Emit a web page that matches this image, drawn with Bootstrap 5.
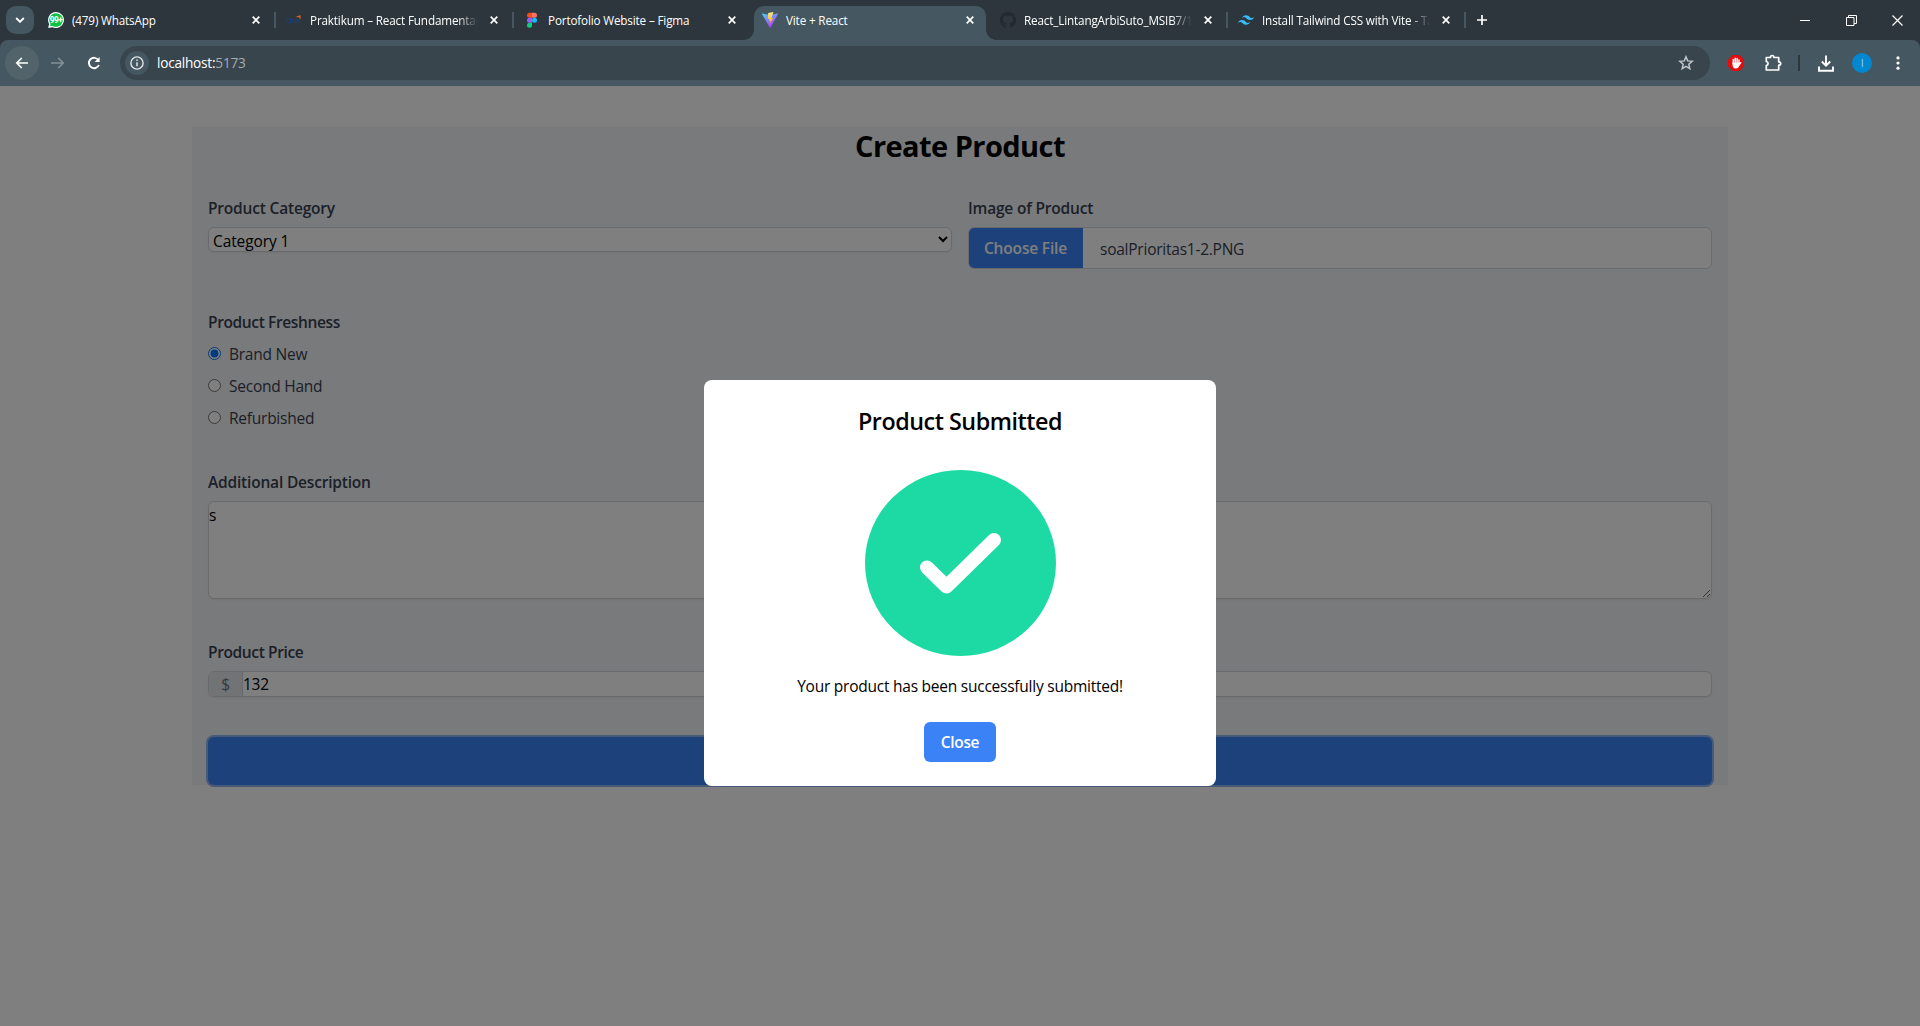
<!DOCTYPE html>
<html lang="en">
<head>
<meta charset="utf-8">
<title>Vite + React</title>
<link href="https://cdn.jsdelivr.net/npm/bootstrap@5.3.0/dist/css/bootstrap.min.css" rel="stylesheet">
<style>
  body { width: 1920px; height: 1026px; overflow: hidden; font-family: "Open Sans", "Noto Sans", sans-serif; font-size: 15.5px; line-height: 24px; letter-spacing: -.24px; color: #000; background: #2c363c; }
  svg { display: block; flex: none; }

  /* browser window */
  .tabstrip { height: 40px; background: #2c363c; }
  .tab-search { width: 28px; height: 28px; margin: 6px; border-radius: 10px; background: #455760; }
  .browser-tab { width: 232px; height: 34px; margin: 6px 6px 0 0; padding: 0 10px 6px 8px; position: relative; font-size: 11.7px; letter-spacing: -.15px; line-height: 16px; color: #fff; }
  .browser-tab .tab-icon { width: 16px; height: 16px; margin-right: 8px; }
  .tab-title { width: 168px; margin-right: 12px; white-space: nowrap; overflow: hidden; }
  .tab-title.fading { -webkit-mask-image: linear-gradient(90deg, #000 148px, transparent 168px); mask-image: linear-gradient(90deg, #000 148px, transparent 168px); }
  .browser-tab.divided::after { content: ""; position: absolute; right: -4px; top: 6px; width: 2px; height: 16px; background: #455760; }
  .browser-tab.current { background: #455760; border-radius: 10px 10px 0 0; }
  .browser-tab.current::before, .browser-tab.current::after { content: ""; position: absolute; bottom: 0; width: 10px; height: 10px; }
  .browser-tab.current::before { left: -10px; background: radial-gradient(circle at 0 0, transparent 9.5px, #455760 10px); }
  .browser-tab.current::after { right: -10px; background: radial-gradient(circle at 100% 0, transparent 9.5px, #455760 10px); }
  .window-buttons { gap: 35px; padding-right: 17px; }
  .toolbar { height: 46px; background: #455760; border-radius: 8px 8px 0 0; padding: 0 15px 0 5px; }
  .nav-round { width: 34px; height: 34px; border-radius: 50%; }
  .nav-round.lit { background: #52646a; }
  .nav-forward { margin: 0 2px; }
  .nav-reload { margin-right: 9px; }
  .address { width: 1590px; height: 34px; border-radius: 17px; background: #39454c; padding: 0 16px 0 5px; font-size: 13.6px; letter-spacing: -.22px; color: #fff; }
  .site-info { width: 24px; height: 24px; border-radius: 50%; background: #455760; margin-right: 8px; }
  .port { color: #a3adb2; }
  .blocker { margin: 0 20px 0 18px; }
  .toolbar-rule { width: 2px; height: 16px; margin: 0 18px 0 16px; background: #2c363c; }
  .avatar { width: 20px; height: 20px; margin: 0 19px 0 18px; border-radius: 50%; background: #0288d1; color: #a9d5ee; font-size: 10.5px; line-height: 20px; }

  /* page */
  .viewport { height: 940px; background: #fff; padding-top: 41px; }
  .product-form { width: 1536px; height: 658px; background: #f3f4f6; padding: 0 16px; }
  .form-title { font-size: 29px; line-height: 36px; font-weight: 700; letter-spacing: -.56px; margin: 0 0 31px; padding-top: 1px; }
  .field-group { margin-bottom: 40px; }
  .field-name { display: block; font-weight: 600; color: #374151; letter-spacing: -.19px; margin-bottom: 7px; padding-top: 1px; }
  .field-name.snug { letter-spacing: -.37px; }
  .outlined { border: 1px solid #d1d5db; border-radius: 6px; background: #fff; box-shadow: 0 1px 2px rgba(0, 0, 0, .05); }
  .native-select { display: block; width: 100%; height: 25px; padding: 1px 0 0; color: #000; letter-spacing: -.1px; font-size: 15.5px; }
  .picker { height: 42px; color: #374151; overflow: hidden; box-shadow: none; }
  .picker-button { width: 115px; margin: -1px 0 -1px -1px; background: #3b82f6; color: #fff; font-weight: 600; letter-spacing: -.17px; }
  .picker-file { padding: 1px 0 0 17px; }
  .radio-line { gap: 8px; color: #374151; margin-bottom: 8px; height: 24px; }
  .radio-line input { width: 13px; height: 13px; margin: 0; accent-color: #0075ff; }
  .radio-line span { padding-top: 1px; }
  .description-box { display: block; width: 100%; height: 98px; padding: 1px 0 0; color: #000; letter-spacing: inherit; }
  .price-row { height: 26px; overflow: hidden; }
  .currency { width: 34px; background: #e5e7eb; border-right: 1px solid #d1d5db; color: #6b7280; }
  .submit-bar { display: block; width: 100%; height: 48px; border: 0; border-radius: 6px; background: #3b82f6; box-shadow: 0 0 0 2px #93b4f0; }

  .backdrop { inset: 0; background: rgba(0, 0, 0, .5); padding-top: 294px; }
  .dialog-box { width: 512px; height: 406px; border-radius: 8px; padding: 24px; background: #fff; }
  .dialog-title { font-size: 23.3px; line-height: 32px; font-weight: 600; letter-spacing: -.46px; margin: 0 0 33px; padding-top: 1px; }
  .dialog-text { margin: 18px 0 24px; }
  .close-button { width: 72px; height: 40px; flex: none; padding: 0; border: 0; border-radius: 6px; background: #3b82f6; color: #fff; font-size: 15.5px; font-weight: 600; letter-spacing: -.35px; }
</style>
</head>
<body>
<svg width="0" height="0" class="position-absolute">
  <symbol id="cross" viewBox="0 0 8 8"><path d="M.7.7l6.600 6.600M7.300.7L.7 7.300" stroke="#fff" stroke-width="1.700"/></symbol>
</svg>

<header>
  <div class="tabstrip d-flex">
    <div class="tab-search d-flex align-items-center justify-content-center"><svg width="10" height="6" viewBox="0 0 10 6"><path d="M1.200 1L5 4.800 8.800 1" fill="none" stroke="#fff" stroke-width="1.900"/></svg></div>

    <div class="browser-tab divided d-flex align-items-center">
      <svg class="tab-icon" viewBox="0 0 16 16"><path d="M8 0a8 8 0 1 1-3.500 15.200L.2 16l.9-4A8 8 0 0 1 8 0z" fill="#fff"/><path d="M8 1.200a6.800 6.800 0 1 1-3.300 12.700l-2.700.4.500-2.400A6.800 6.800 0 0 1 8 1.200z" fill="#0cc243"/><text x="8" y="11.200" text-anchor="middle" font-family="Roboto, sans-serif" font-size="8.300" font-weight="700" letter-spacing="-.5" fill="#fff">99+</text></svg>
      <span class="tab-title">(479) WhatsApp</span><svg width="8" height="8"><use href="#cross"/></svg>
    </div>
    <div class="browser-tab divided d-flex align-items-center">
      <svg class="tab-icon" viewBox="0 0 16 16"><path d="M9.500 5l5-2v4.500l-1.600-2.200z" fill="#e2653b"/><g fill="none" stroke="#1d3d70" stroke-width="1.300"><circle cx="3" cy="8.800" r="1.900"/><path d="M6.300 11V7v2q.1-1.500 1.600-1.500M9.500 11V8.500q0-1 1-1t1 1V11M13 7.500V11"/></g></svg>
      <span class="tab-title fading">Praktikum – React Fundamental</span><svg width="8" height="8"><use href="#cross"/></svg>
    </div>
    <div class="browser-tab d-flex align-items-center">
      <svg class="tab-icon" viewBox="0 0 16 16"><path d="M8 .8H5.500a2.500 2.500 0 0 0 0 5H8z" fill="#f24e1e"/><path d="M8 .8h2.500a2.500 2.500 0 0 1 0 5H8z" fill="#ff7262"/><path d="M8 5.800H5.500a2.500 2.500 0 0 0 0 5H8z" fill="#a259ff"/><circle cx="10.500" cy="8.300" r="2.500" fill="#1abcfe"/><path d="M8 10.800H5.500A2.500 2.500 0 1 0 8 13.300z" fill="#0acf83"/></svg>
      <span class="tab-title">Portofolio Website – Figma</span><svg width="8" height="8"><use href="#cross"/></svg>
    </div>
    <div class="browser-tab current d-flex align-items-center">
      <svg class="tab-icon" viewBox="0 0 16 16"><defs><linearGradient id="va" x1="0" y1="0" x2=".6" y2="1"><stop stop-color="#41d1ff"/><stop offset="1" stop-color="#bd34fe"/></linearGradient><linearGradient id="vb" x1="0" y1="0" x2="0" y2="1"><stop stop-color="#ffea83"/><stop offset="1" stop-color="#ffa800"/></linearGradient></defs><path d="M15.900 2.300L8.500 15.600a.5.5 0 0 1-.8 0L.1 2.300a.4.4 0 0 1 .4-.7L8 3l7.400-1.400a.4.4 0 0 1 .5.700z" fill="url(#va)"/><path d="M11.500 0L6.200 1.100l-.4 6 1.700-.3-.4 2.300 1.300-.4-.7 3.400 3.500-6-1.900.4z" fill="url(#vb)"/></svg>
      <span class="tab-title">Vite + React</span><svg width="8" height="8"><use href="#cross"/></svg>
    </div>
    <div class="browser-tab divided d-flex align-items-center">
      <svg class="tab-icon" viewBox="0 0 16 16"><path fill="#24292f" d="M8 0C3.580 0 0 3.580 0 8c0 3.540 2.290 6.530 5.470 7.590.4.070.55-.17.55-.38 0-.19-.01-.82-.01-1.490-2.010.37-2.530-.49-2.690-.94-.09-.23-.48-.94-.82-1.130-.28-.15-.68-.52-.01-.53.63-.01 1.080.58 1.230.82.720 1.210 1.870.87 2.330.66.070-.52.28-.87.51-1.070-1.780-.2-3.640-.89-3.640-3.950 0-.87.31-1.590.82-2.150-.08-.2-.36-1.020.08-2.120 0 0 .67-.21 2.200.82.640-.18 1.320-.27 2-.27s1.360.09 2 .27c1.530-1.040 2.200-.82 2.200-.82.44 1.100.16 1.920.08 2.120.51.56.82 1.270.82 2.150 0 3.070-1.870 3.750-3.650 3.950.29.25.54.73.54 1.480 0 1.070-.01 1.930-.01 2.200 0 .21.15.46.55.38A8.010 8.010 0 0 0 16 8c0-4.420-3.580-8-8-8z"/></svg>
      <span class="tab-title fading">React_LintangArbiSuto_MSIB7/1</span><svg width="8" height="8"><use href="#cross"/></svg>
    </div>
    <div class="browser-tab divided d-flex align-items-center">
      <svg class="tab-icon" viewBox="0 0 54 54"><path fill="#38bdf8" d="M27 10.800q-10.800 0-13.500 10.800 4.050-5.400 9.450-4.050c2.050.51 3.520 2.010 5.140 3.650C30.740 23.900 33.800 27 40.500 27q10.800 0 13.500-10.800-4.050 5.400-9.450 4.050c-2.050-.51-3.520-2.010-5.140-3.650C36.760 13.900 33.700 10.800 27 10.800zM13.500 27Q2.700 27 0 37.800q4.050-5.400 9.450-4.050c2.050.51 3.520 2.010 5.140 3.650 2.650 2.700 5.710 5.800 12.410 5.800q10.800 0 13.500-10.800-4.050 5.400-9.450 4.050c-2.050-.51-3.520-2.010-5.140-3.650C23.260 30.100 20.200 27 13.500 27z"/></svg>
      <span class="tab-title fading">Install Tailwind CSS with Vite - Ta</span><svg width="8" height="8"><use href="#cross"/></svg>
    </div>
    <svg class="align-self-center ms-2" width="12" height="12" viewBox="0 0 12 12"><path d="M6 1v10M1 6h10" stroke="#fff" stroke-width="1.700"/></svg>

    <div class="window-buttons d-flex align-items-center ms-auto">
      <svg width="11" height="11" viewBox="0 0 11 11"><path d="M0 5.500h10" stroke="#fff"/></svg>
      <svg width="11" height="11" viewBox="0 0 11 11"><path d="M.5 2.500h7.500v8H.5zM2.500 2.500v-2h8v8H8" fill="none" stroke="#fff"/></svg>
      <svg width="11" height="11" viewBox="0 0 11 11"><path d="M.5.5l10 10M10.500.5l-10 10" stroke="#fff" stroke-width="1.200"/></svg>
    </div>
  </div>

  <div class="toolbar d-flex align-items-center">
    <div class="nav-round lit d-flex align-items-center justify-content-center"><svg width="14" height="12" viewBox="0 0 14 12"><path d="M13 6H2M6.800 1L1.800 6l5 5" fill="none" stroke="#fff" stroke-width="1.700"/></svg></div>
    <div class="nav-round nav-forward d-flex align-items-center justify-content-center"><svg width="14" height="12" viewBox="0 0 14 12"><path d="M0 6h12M7.200 1l5 5-5 5" fill="none" stroke="#839096" stroke-width="1.700"/></svg></div>
    <div class="nav-round nav-reload d-flex align-items-center justify-content-center"><svg width="14" height="14" viewBox="0 0 14 14"><path d="M11.900 9a5.200 5.200 0 1 1-.4-4.800" fill="none" stroke="#fff" stroke-width="1.900"/><path d="M12.600 1v5H7.600z" fill="#fff"/></svg></div>
    <div class="address d-flex align-items-center">
      <span class="site-info d-flex align-items-center justify-content-center"><svg width="14" height="14" viewBox="0 0 14 14"><circle cx="7" cy="7" r="6.100" fill="none" stroke="#dfe3e5" stroke-width="1.400"/><path d="M7 6.200v4M7 3.600v1.500" stroke="#dfe3e5" stroke-width="1.500"/></svg></span>
      <span>localhost:<span class="port">5173</span></span>
      <svg class="ms-auto" width="16" height="16" viewBox="0 0 16 16"><path d="M8 1.800l1.700 4.100 4.500.4-3.400 2.900 1 4.400L8 11.300l-3.800 2.300 1-4.400-3.400-2.900 4.500-.4z" fill="none" stroke="#c1c6c9" stroke-width="1.500"/></svg>
    </div>
    <svg class="blocker" width="16" height="16" viewBox="0 0 16 16"><path d="M4.700 0h6.600L16 4.700v6.600L11.300 16H4.700L0 11.300V4.700z" fill="#e40d0d"/><path d="M5.300 9V4.600M7.200 7.500V3.300M9.100 7.500V3.500M11 9V5" stroke="#fff" stroke-width="1.500" stroke-linecap="round"/><path d="M4.600 7.500h7.200l1-.5c.8 0 .7.600.4 1l-2.700 4.300q-.8 1.200-2.700 1.200-3.200 0-3.200-3.400z" fill="#fff"/></svg>
    <svg width="18" height="18" viewBox="0 0 18 18"><path d="M2.300 3.500h4.200q0-2 1.700-2t1.700 2h4.800v4.300q2 0 2 1.700t-2 1.700v4.800H2.300v-4.500q1.800-.3 1.800-2t-1.800-2z" fill="none" stroke="#fff" stroke-width="1.700" stroke-linejoin="round"/></svg>
    <span class="toolbar-rule"></span>
    <svg width="16" height="17" viewBox="0 0 16 17"><path d="M8 .5v10M3.800 6.500L8 10.700l4.200-4.200M1 11.500v4.200h14v-4.200" fill="none" stroke="#fff" stroke-width="1.900"/></svg>
    <span class="avatar text-center">I</span>
    <svg width="14" height="14" viewBox="0 0 14 14" fill="#fff"><circle cx="7" cy="1.900" r="1.600"/><circle cx="7" cy="7" r="1.600"/><circle cx="7" cy="12.200" r="1.600"/></svg>
  </div>
</header>

<main class="viewport position-relative overflow-hidden">
  <form class="product-form mx-auto">
    <h1 class="form-title text-center">Create Product</h1>
    <div class="field-group row gx-3">
      <div class="col-6">
        <label class="field-name" for="category">Product Category</label>
        <select id="category" class="native-select outlined"><option>Category 1</option></select>
      </div>
      <div class="col-6">
        <label class="field-name">Image of Product</label>
        <div class="picker outlined d-flex align-items-center">
          <span class="picker-button d-flex align-items-center justify-content-center align-self-stretch">Choose File</span>
          <span class="picker-file">soalPrioritas1-2.PNG</span>
        </div>
      </div>
    </div>
    <div class="field-group">
      <span class="field-name snug">Product Freshness</span>
      <label class="radio-line d-flex align-items-center"><input type="radio" name="fresh" checked><span>Brand New</span></label>
      <label class="radio-line d-flex align-items-center"><input type="radio" name="fresh"><span>Second Hand</span></label>
      <label class="radio-line d-flex align-items-center mb-0"><input type="radio" name="fresh"><span>Refurbished</span></label>
    </div>
    <div class="field-group">
      <label class="field-name" for="desc">Additional Description</label>
      <textarea id="desc" class="description-box outlined">s</textarea>
    </div>
    <div class="field-group">
      <span class="field-name snug">Product Price</span>
      <div class="price-row outlined d-flex align-items-stretch">
        <span class="currency text-center">$</span><span>132</span>
      </div>
    </div>
    <button type="button" class="submit-bar" aria-label="Submit"></button>
  </form>

  <div class="backdrop position-absolute">
    <div class="dialog-box mx-auto d-flex flex-column align-items-center">
      <h2 class="dialog-title">Product Submitted</h2>
      <svg width="191" height="186" viewBox="0 0 191 186"><ellipse cx="95.500" cy="93" rx="95.500" ry="93" fill="#1ddaa5"/><path d="M62 97.500L81.500 116.500 129 70" fill="none" stroke="#fff" stroke-width="14" stroke-linecap="round" stroke-linejoin="round"/></svg>
      <p class="dialog-text">Your product has been successfully submitted!</p>
      <button type="button" class="close-button">Close</button>
    </div>
  </div>
</main>
<script src="https://cdn.jsdelivr.net/npm/bootstrap@5.3.0/dist/js/bootstrap.bundle.min.js"></script>
</body>
</html>
